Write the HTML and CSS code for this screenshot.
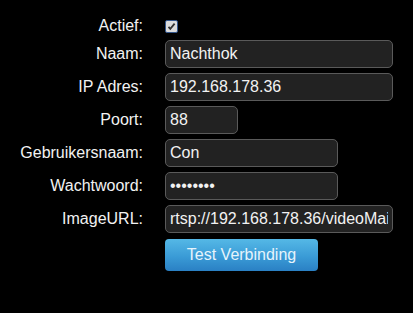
FILE: index.html
```html
<!DOCTYPE html>
<html>
<head>
    <meta charset="UTF-8">
    <title>Camera instellingen</title>
    <link rel="stylesheet" href="styles.css">
</head>
<body>
    <form class="camera-form">
        <label class="field-label" for="actief">Actief:</label>
        <div class="field check-field">
            <input type="checkbox" id="actief" class="check" checked>
        </div>

        <label class="field-label" for="naam">Naam:</label>
        <div class="field">
            <input type="text" id="naam" class="text-input wide" value="Nachthok">
        </div>

        <label class="field-label" for="ip">IP Adres:</label>
        <div class="field">
            <input type="text" id="ip" class="text-input wide" value="192.168.178.36">
        </div>

        <label class="field-label" for="poort">Poort:</label>
        <div class="field">
            <input type="text" id="poort" class="text-input short" value="88">
        </div>

        <label class="field-label" for="gebruiker">Gebruikersnaam:</label>
        <div class="field">
            <input type="text" id="gebruiker" class="text-input medium" value="Con">
        </div>

        <label class="field-label" for="wachtwoord">Wachtwoord:</label>
        <div class="field">
            <input type="password" id="wachtwoord" class="text-input medium" value="geheim12">
        </div>

        <label class="field-label" for="imageurl">ImageURL:</label>
        <div class="field">
            <input type="text" id="imageurl" class="text-input wide" value="rtsp://192.168.178.36/videoMain">
        </div>

        <div></div>
        <div class="field">
            <button type="button" class="test-button">Test Verbinding</button>
        </div>
    </form>
</body>
</html>
```

FILE: styles.css
```css
body {
    margin: 0;
    background: #000;
    color: #f2f2f2;
    font-family: "Liberation Sans", Arial, sans-serif;
    font-size: 16px;
}

.camera-form {
    display: grid;
    grid-template-columns: 143px auto;
    column-gap: 22px;
    row-gap: 5px;
    padding-top: 17px;
    align-items: center;
}

.field-label {
    text-align: right;
    line-height: 18px;
}

.field {
    display: flex;
    align-items: center;
}

.check-field {
    height: 17px;
}

.check {
    appearance: none;
    -webkit-appearance: none;
    width: 13px;
    height: 13px;
    margin: 0;
    border: 1px solid #34568c;
    border-radius: 2px;
    background: #dcdcdc url("data:image/svg+xml;utf8,<svg xmlns='http://www.w3.org/2000/svg' width='11' height='11' viewBox='0 0 11 11'><path d='M2.5 5.8 L4.3 7.8 L8.6 2.6' fill='none' stroke='%23333' stroke-width='1.8'/></svg>") center / 11px 11px no-repeat;
}

.text-input {
    box-sizing: border-box;
    height: 28px;
    padding: 0 4px;
    margin: 0;
    background: #222;
    border: 1px solid #5a5a5a;
    border-radius: 5px;
    color: #f2f2f2;
    font-family: inherit;
    font-size: 16px;
    outline: none;
}

.wide {
    width: 228px;
}

.medium {
    width: 173px;
}

.short {
    width: 73px;
}

.test-button {
    width: 153px;
    height: 32px;
    margin-top: 1px;
    border: none;
    border-radius: 4px;
    background: linear-gradient(to bottom, #55b8e6, #3a9bd6 55%, #2a80c4);
    color: #e6f4fc;
    font-family: inherit;
    font-size: 16px;
    cursor: pointer;
}
```
